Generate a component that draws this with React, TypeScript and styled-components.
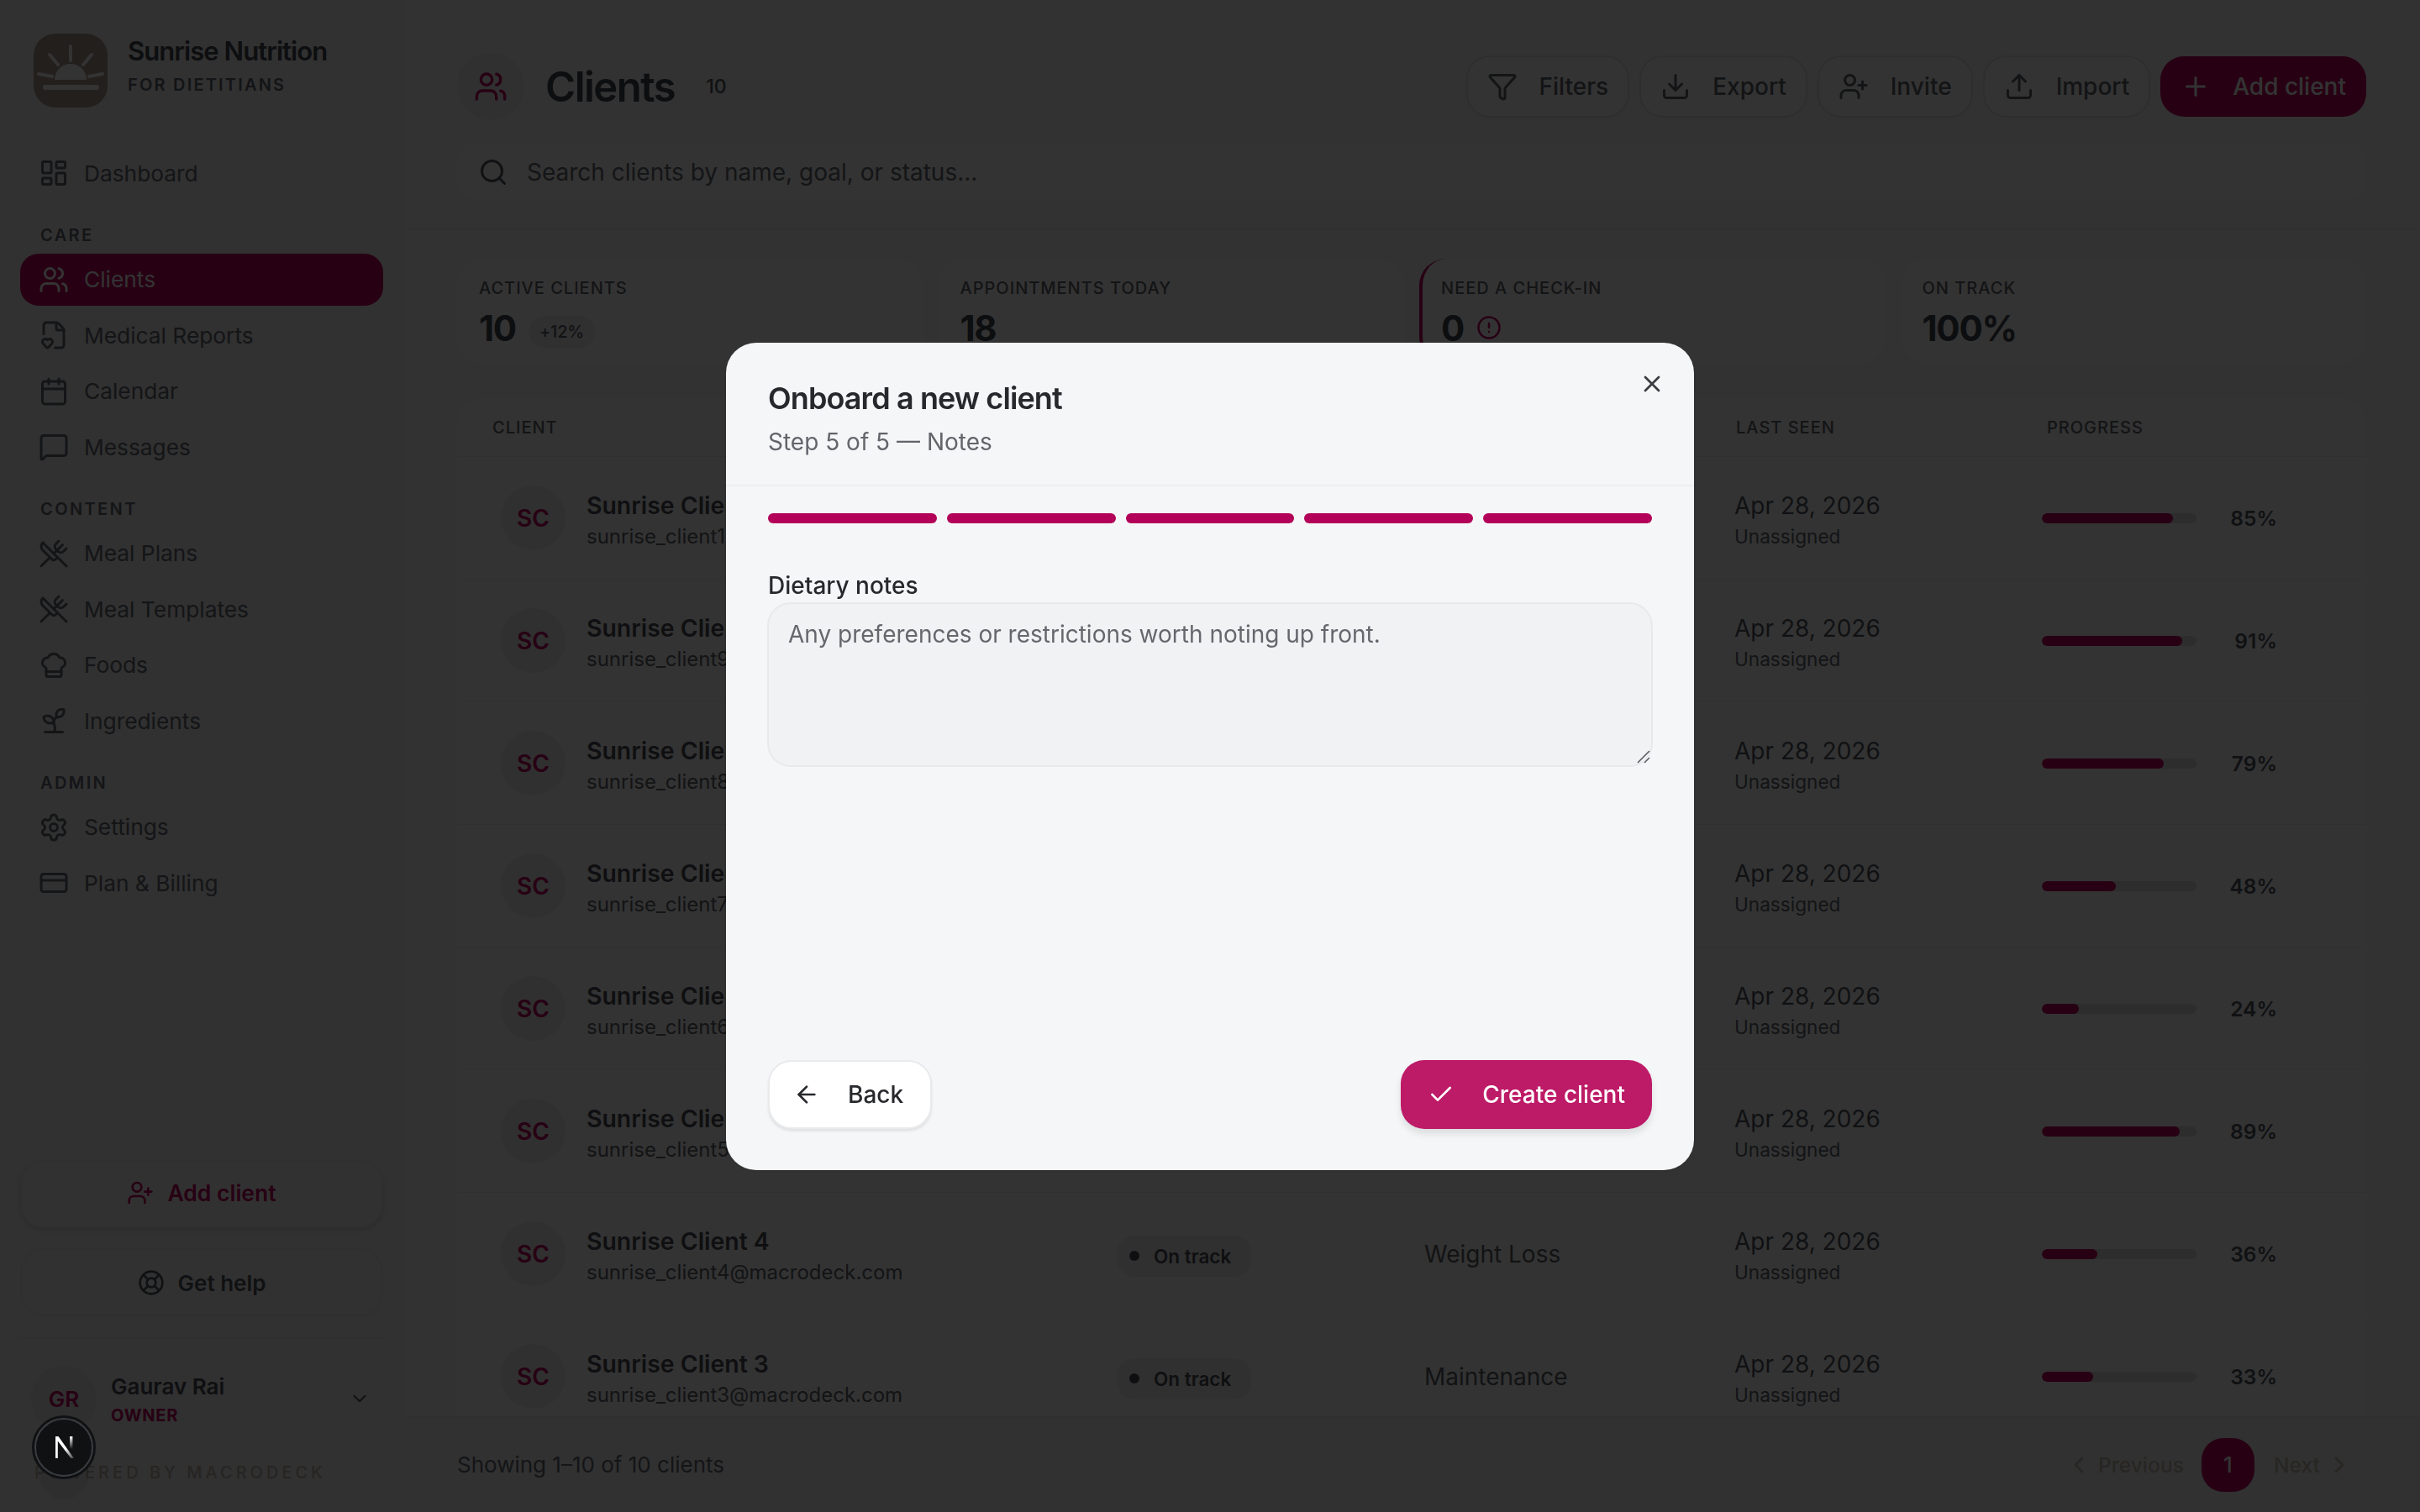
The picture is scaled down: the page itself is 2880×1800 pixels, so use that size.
import styled, { createGlobalStyle } from 'styled-components';
import {
  ArrowLeft, Calendar, Check, ChefHat, ChevronDown, ChevronLeft, ChevronRight, CircleAlert, CreditCard,
  Download, FileHeart, Funnel, LayoutDashboard, LifeBuoy, MessageSquare, Plus, Search, Settings, Sprout,
  Upload, UserPlus, Users, UtensilsCrossed, X,
} from 'lucide-react';

const CRIMSON = '#c4005f';

const GlobalStyle = createGlobalStyle`
  * { box-sizing: border-box; }
  html, body { margin: 0; height: 100%; overflow: hidden; }
  body { font-family: Inter, "Liberation Sans", sans-serif; background: #f8f8f8; color: #555a64; }
`;

const Shell = styled.div`
  display: grid;
  grid-template-columns: 480px 1fr;
  height: 1800px;
  overflow: hidden;
`;

const Sidebar = styled.aside`
  display: flex;
  flex-direction: column;
  padding: 40px 24px 35px;
  background: #f2f2f2;
`;

const Brand = styled.div`
  display: flex;
  align-items: flex-start;
  gap: 24px;
  padding-left: 16px;
  height: 88px;
`;

const BrandText = styled.div`
  display: flex;
  flex-direction: column;
  gap: 8px;
  padding-top: 1px;
`;

const BrandName = styled.div`
  font-size: 31px;
  line-height: 40px;
  font-weight: 600;
  letter-spacing: -0.03em;
  color: #44474f;
`;

const BrandSub = styled.div`
  font-size: 20px;
  line-height: 24px;
  font-weight: 600;
  letter-spacing: 0.11em;
  color: #62666e;
`;

const Nav = styled.nav`
  display: flex;
  flex-direction: column;
  margin-top: 47px;
`;

const NavLabel = styled.div`
  height: 24px;
  line-height: 24px;
  margin: 30px 0 10px 24px;
  font-size: 20px;
  font-weight: 600;
  letter-spacing: 0.12em;
  color: #666a72;
`;

const NavGroup = styled.div`
  display: flex;
  flex-direction: column;
  gap: 4px;
`;

const NavItem = styled.a<{ $active?: boolean }>`
  display: flex;
  align-items: center;
  gap: 18px;
  height: 62.5px;
  padding-left: 22px;
  border-radius: 22px;
  font-size: 26.3px;
  color: ${(p) => (p.$active ? '#fff' : '#666a72')};
  background: ${(p) => (p.$active ? CRIMSON : 'transparent')};
  svg { width: 36px; height: 36px; flex: none; }
`;

const SideBottom = styled.div`
  margin-top: auto;
  display: flex;
  flex-direction: column;
`;

const SideButton = styled.button<{ $primary?: boolean }>`
  display: flex;
  align-items: center;
  justify-content: center;
  gap: 16px;
  height: 81px;
  padding-bottom: ${(p) => (p.$primary ? '4px' : '0')};
  border-radius: 28px;
  border: 2px solid #ececec;
  background: ${(p) => (p.$primary ? '#f6f6f6' : '#f2f2f2')};
  box-shadow: ${(p) => (p.$primary ? '0 3px 4px rgba(0,0,0,0.1)' : 'none')};
  font: 600 ${(p) => (p.$primary ? '26.5px' : '26px')} Inter, sans-serif;
  color: ${(p) => (p.$primary ? CRIMSON : '#52565e')};
  svg { width: 32px; height: 32px; }
  & + & { margin-top: 24px; }
`;

const SideDivider = styled.div`
  height: 2px;
  margin-top: 25px;
  background: #ebebeb;
`;

const UserRow = styled.div`
  display: flex;
  align-items: center;
  gap: 17px;
  margin: 32px 0 0 13px;
  padding-right: 15px;
`;

const UserAvatar = styled.div`
  display: grid;
  place-items: center;
  width: 78px;
  height: 78px;
  border-radius: 50%;
  background: #e8e8e8;
  font-size: 26px;
  font-weight: 600;
  color: ${CRIMSON};
`;

const UserInfo = styled.div`
  flex: 1;
  display: flex;
  flex-direction: column;
  gap: 2px;
  padding-top: 3px;
`;

const UserName = styled.div`
  font-size: 26px;
  line-height: 34px;
  font-weight: 600;
  color: #4a4e56;
`;

const UserRole = styled.div`
  font-size: 20px;
  line-height: 30px;
  font-weight: 700;
  letter-spacing: 0.04em;
  color: ${CRIMSON};
`;

const UserChevron = styled(ChevronDown)`
  width: 26px;
  height: 26px;
  color: #5a5e66;
`;

const Powered = styled.div`
  margin: 37px 0 0 17px;
  font-size: 20px;
  line-height: 24px;
  font-weight: 500;
  letter-spacing: 0.2em;
  color: #c0b6ac;
`;

const Main = styled.main`
  display: flex;
  flex-direction: column;
  min-width: 0;
  height: 1800px;
`;

const PageHeader = styled.header`
  display: flex;
  flex-direction: column;
  gap: 27px;
  height: 273px;
  padding: 63px 64px 0;
  border-bottom: 1px solid #ececec;
`;

const TitleRow = styled.div`
  display: flex;
  align-items: center;
  height: 80px;
`;

const TitleIcon = styled.div`
  display: grid;
  place-items: center;
  width: 80px;
  height: 80px;
  border-radius: 50%;
  background: #eeeeee;
  color: ${CRIMSON};
  svg { width: 40px; height: 40px; }
`;

const PageTitle = styled.h1`
  margin: 0 0 0 25px;
  font-size: 49px;
  font-weight: 600;
  letter-spacing: -0.03em;
  color: #44474f;
`;

const PageCount = styled.span`
  margin-left: 37px;
  font-size: 23px;
  font-weight: 500;
  color: #52565e;
`;

const Actions = styled.div`
  display: flex;
  align-items: center;
  gap: 12px;
  margin-left: auto;
`;

const ActionButton = styled.button<{ $primary?: boolean }>`
  display: flex;
  align-items: center;
  gap: 26px;
  height: ${(p) => (p.$primary ? '72px' : '74px')};
  padding: 0 ${(p) => (p.$primary ? '24px' : '23px')};
  border-radius: 28px;
  border: ${(p) => (p.$primary ? 'none' : '2px solid #e4e4e4')};
  background: ${(p) => (p.$primary ? CRIMSON : '#ffffff')};
  font: 500 28px Inter, sans-serif;
  color: ${(p) => (p.$primary ? '#fff' : '#5f636b')};
  svg { width: 36px; height: 36px; }
`;

const SearchBar = styled.div`
  display: flex;
  align-items: center;
  gap: 22px;
  height: 68px;
  padding: 2px 0 0 25px;
  border-radius: 24px;
  background: #ffffff;
  font-size: 28px;
  color: #666a72;
  svg { width: 36px; height: 36px; color: #52565e; }
`;

const Body = styled.div`
  flex: 1;
  min-height: 0;
  overflow: hidden;
  padding: 35px 64px 0;
`;

const StatGrid = styled.div`
  display: grid;
  grid-template-columns: repeat(4, 1fr);
  gap: 18px;
`;

const StatCard = styled.div<{ $accent?: boolean }>`
  height: 125px;
  padding: 22px 0 0 ${(p) => (p.$accent ? '22px' : '26px')};
  border-radius: 32px;
  background: #ffffff;
  border-left: ${(p) => (p.$accent ? `4px solid ${CRIMSON}` : 'none')};
`;

const StatLabel = styled.div`
  font-size: 20px;
  line-height: 26px;
  font-weight: 500;
  letter-spacing: 0.05em;
  color: #5f636b;
`;

const StatValueRow = styled.div`
  display: flex;
  align-items: center;
  gap: 15px;
  margin-top: 7px;
  height: 54px;
  color: ${CRIMSON};
  svg { width: 30px; height: 30px; }
`;

const StatValue = styled.span`
  font-size: 42px;
  font-weight: 700;
  letter-spacing: -0.03em;
  color: #44474f;
`;

const StatBadge = styled.span`
  display: flex;
  align-items: center;
  height: 38px;
  margin-top: 10px;
  padding: 0 13px;
  border-radius: 19px;
  background: #efefef;
  font-size: 20px;
  font-weight: 500;
  letter-spacing: -0.01em;
  color: #5a5e66;
`;

const Table = styled.div`
  margin-top: 40px;
  border-radius: 32px 32px 0 0;
  background: #ffffff;
`;

const COLUMNS = '786px 365px 369px 366px 1fr';

const TableHead = styled.div`
  display: grid;
  grid-template-columns: ${COLUMNS};
  align-items: center;
  height: 71px;
  padding-top: 2px;
  border-bottom: 1px solid #f0f0f0;
`;

const HeadCell = styled.div<{ $inset?: number }>`
  padding-left: ${(p) => p.$inset ?? 0}px;
  font-size: 20px;
  font-weight: 500;
  letter-spacing: 0.05em;
  color: #5f636b;
`;

const Row = styled.div`
  display: grid;
  grid-template-columns: ${COLUMNS};
  align-items: center;
  height: 146px;
  border-bottom: 1px solid #f0f0f0;
`;

const ClientCell = styled.div`
  display: flex;
  align-items: center;
  gap: 25px;
  padding-left: 52px;
`;

const ClientAvatar = styled.div`
  display: grid;
  place-items: center;
  width: 77px;
  height: 77px;
  border-radius: 50%;
  background: #eeeeee;
  font-size: 28px;
  font-weight: 600;
  color: ${CRIMSON};
`;

const Stack = styled.div`
  display: flex;
  flex-direction: column;
  gap: 2px;
  padding-top: 6px;
`;

const ClientName = styled.div`
  font-size: 28.4px;
  line-height: 36px;
  font-weight: 600;
  color: #4a4e56;
`;

const ClientEmail = styled.div`
  font-size: 24px;
  line-height: 34px;
  color: #5f636b;
`;

const StatusPill = styled.div`
  display: inline-flex;
  align-items: center;
  justify-self: start;
  gap: 17px;
  height: 49px;
  margin-top: 5px;
  padding: 0 24px 0 14px;
  border-radius: 20px;
  background: #efefef;
  font-size: 22.5px;
  font-weight: 600;
  color: #4a4e56;
  &::before {
    content: '';
    width: 12px;
    height: 12px;
    border-radius: 50%;
    background: #4a4e56;
  }
`;

const GoalCell = styled.div`
  font-size: 28px;
  color: #5a5e66;
`;

const SeenDate = styled.div`
  font-size: 28px;
  line-height: 36px;
  color: #52565e;
`;

const SeenBy = styled.div`
  font-size: 22.6px;
  line-height: 34px;
  color: #62666e;
`;

const ProgressCell = styled.div`
  display: flex;
  align-items: center;
`;

const Track = styled.div`
  width: 184px;
  height: 12px;
  border-radius: 6px;
  background: #dfdfdf;
  overflow: hidden;
`;

const Fill = styled.div`
  height: 100%;
  border-radius: 6px;
  background: ${CRIMSON};
`;

const Percent = styled.div`
  width: 96px;
  text-align: right;
  font-size: 24.5px;
  font-weight: 600;
  color: #52565e;
`;

const PageFooter = styled.footer`
  display: flex;
  align-items: center;
  justify-content: space-between;
  height: 114px;
  flex: none;
  padding: 0 64px;
  border-top: 1px solid #eaeaea;
  background: #f4f4f4;
`;

const FooterNote = styled.div`
  font-size: 26px;
  color: #666a72;
`;

const Pager = styled.div`
  display: flex;
  align-items: center;
  gap: 5px;
`;

const PagerLink = styled.div`
  display: flex;
  align-items: center;
  gap: 7px;
  padding: 0 16px 0 18px;
  font-size: 24.6px;
  font-weight: 500;
  color: #c6bcb0;
  svg { width: 32px; height: 32px; }
`;

const PagerCurrent = styled.div`
  display: grid;
  place-items: center;
  width: 63px;
  height: 64px;
  border-radius: 26px;
  background: ${CRIMSON};
  font-size: 26px;
  font-weight: 500;
  color: #fff;
`;

const Backdrop = styled.div`
  position: fixed;
  inset: 0;
  display: flex;
  align-items: center;
  justify-content: center;
  background: rgba(0, 0, 0, 0.8);
`;

const Modal = styled.div`
  position: relative;
  display: flex;
  flex-direction: column;
  width: 1152px;
  height: 985px;
  border-radius: 36px;
  background: #f5f6f8;
  color: #27282c;
  box-shadow: 0 1px 0 2px rgba(0, 0, 0, 0.04);
`;

const ModalHeader = styled.div`
  padding: 42px 50px 31px;
  border-bottom: 2px solid #eeeff1;
`;

const ModalTitle = styled.h2`
  margin: 0;
  font-size: 36px;
  line-height: 48px;
  font-weight: 600;
  letter-spacing: -0.025em;
`;

const ModalSub = styled.p`
  margin: 8px 0 0;
  font-size: 28px;
  line-height: 40px;
  color: #63656b;
`;

const CloseButton = styled.button`
  position: absolute;
  top: 33px;
  right: 34px;
  padding: 0;
  width: 32px;
  height: 32px;
  border: none;
  background: none;
  color: #3a3b40;
  svg { width: 32px; height: 32px; display: block; }
`;

const StepBars = styled.div`
  display: grid;
  grid-template-columns: repeat(5, 1fr);
  gap: 12px;
  margin: 32px 50px 0;
`;

const StepBar = styled.div`
  height: 12px;
  border-radius: 6px;
  background: #b30058;
`;

const Field = styled.label`
  position: relative;
  display: block;
  margin: 55px 49px 0;
`;

const FieldLabel = styled.span`
  display: block;
  margin-left: 1px;
  height: 39px;
  font-size: 28px;
  line-height: 38px;
  font-weight: 500;
  color: #27282c;
`;

const NotesInput = styled.textarea`
  display: block;
  width: 100%;
  height: 196px;
  padding: 16px 23px;
  border: 2px solid #e8e9eb;
  border-radius: 28px;
  outline: none;
  resize: none;
  background: #f1f2f4;
  font: 400 28px/40px Inter, sans-serif;
  &::placeholder { color: #65676d; opacity: 1; }
`;

const ResizeGrip = styled.svg`
  position: absolute;
  right: 3px;
  bottom: 4px;
  width: 16px;
  height: 16px;
`;

const ModalFooter = styled.div`
  display: flex;
  align-items: center;
  justify-content: space-between;
  margin: auto 50px 49px;
`;

const ModalButton = styled.button<{ $primary?: boolean }>`
  display: flex;
  align-items: center;
  gap: 33px;
  height: 82px;
  padding: ${(p) => (p.$primary ? '0 32px' : '0 32px 0 28px')};
  border-radius: 28px;
  border: ${(p) => (p.$primary ? 'none' : '2px solid #e9eaec')};
  background: ${(p) => (p.$primary ? '#bd1a67' : '#ffffff')};
  box-shadow: ${(p) => (p.$primary ? '0 6px 8px rgba(0,0,0,0.1)' : '0 3px 3px rgba(0,0,0,0.08)')};
  font: 500 28px Inter, sans-serif;
  color: ${(p) => (p.$primary ? '#ffffff' : '#27282c')};
  svg { width: 32px; height: 32px; }
`;

const DevBadge = styled.div`
  position: fixed;
  left: 38px;
  top: 1685px;
  display: grid;
  place-items: center;
  width: 76px;
  height: 76px;
  border-radius: 50%;
  background: #0f1113;
  border: 3px solid #0f1113;
  outline: 2px solid #3c3d40;
  outline-offset: -5px;
  box-shadow: 0 32px 0 -8px rgba(0, 0, 0, 0.06);
`;

const navTop = [{ label: 'Dashboard', icon: LayoutDashboard }];
const navSections = [
  {
    title: 'CARE',
    items: [
      { label: 'Clients', icon: Users, active: true },
      { label: 'Medical Reports', icon: FileHeart },
      { label: 'Calendar', icon: Calendar },
      { label: 'Messages', icon: MessageSquare },
    ],
  },
  {
    title: 'CONTENT',
    items: [
      { label: 'Meal Plans', icon: UtensilsCrossed },
      { label: 'Meal Templates', icon: UtensilsCrossed },
      { label: 'Foods', icon: ChefHat },
      { label: 'Ingredients', icon: Sprout },
    ],
  },
  {
    title: 'ADMIN',
    items: [
      { label: 'Settings', icon: Settings },
      { label: 'Plan & Billing', icon: CreditCard },
    ],
  },
];

const clients = [
  { n: 10, goal: 'Weight Loss', progress: 85 },
  { n: 9, goal: 'Maintenance', progress: 91 },
  { n: 8, goal: 'Weight Loss', progress: 79 },
  { n: 7, goal: 'Muscle Gain', progress: 48 },
  { n: 6, goal: 'Maintenance', progress: 24 },
  { n: 5, goal: 'Weight Loss', progress: 89 },
  { n: 4, goal: 'Weight Loss', progress: 36 },
  { n: 3, goal: 'Maintenance', progress: 33 },
];

const SunLogo = () => (
  <svg width="88" height="88" viewBox="0 0 88 88" fill="none">
    <rect width="88" height="88" rx="26" fill="#b09a90" />
    <g stroke="#ffffff" strokeWidth="4" strokeLinecap="round">
      <path d="M44 15v17M19 25l10 12M69 25 59 37M6 48l16 3M82 48l-16 3" />
      <path d="M14 64h61" strokeWidth="6" />
    </g>
    <path d="M25 55a19 19 0 0 1 38 0z" fill="#ffffff" />
  </svg>
);

const NextMark = () => (
  <svg width="26" height="28" viewBox="0 0 26 28" fill="none">
    <defs>
      <linearGradient id="nextFade" x1="0" y1="0" x2="1" y2="1">
        <stop offset="0.55" stopColor="#fff" />
        <stop offset="1" stopColor="#fff" stopOpacity="0.2" />
      </linearGradient>
      <linearGradient id="nextBar" x1="0" y1="0" x2="0" y2="1">
        <stop offset="0" stopColor="#fff" />
        <stop offset="1" stopColor="#fff" stopOpacity="0" />
      </linearGradient>
    </defs>
    <path d="M3 1h3.5L25 27h-3.6L5.8 6.5V27H3z" fill="url(#nextFade)" />
    <rect x="20" y="1" width="3.4" height="15" fill="url(#nextBar)" />
  </svg>
);

const App = () => {
  return (
    <>
      <GlobalStyle />
      <Shell>
        <Sidebar>
          <Brand>
            <SunLogo />
            <BrandText>
              <BrandName>Sunrise Nutrition</BrandName>
              <BrandSub>FOR DIETITIANS</BrandSub>
            </BrandText>
          </Brand>
          <Nav>
            <NavGroup>
              {navTop.map(({ label, icon: Icon }) => (
                <NavItem key={label}>
                  <Icon />
                  {label}
                </NavItem>
              ))}
            </NavGroup>
            {navSections.map((section) => (
              <div key={section.title}>
                <NavLabel>{section.title}</NavLabel>
                <NavGroup>
                  {section.items.map(({ label, icon: Icon, active }: any) => (
                    <NavItem key={label} $active={active}>
                      <Icon />
                      {label}
                    </NavItem>
                  ))}
                </NavGroup>
              </div>
            ))}
          </Nav>
          <SideBottom>
            <SideButton $primary>
              <UserPlus />
              Add client
            </SideButton>
            <SideButton>
              <LifeBuoy />
              Get help
            </SideButton>
            <SideDivider />
            <UserRow>
              <UserAvatar>GR</UserAvatar>
              <UserInfo>
                <UserName>Gaurav Rai</UserName>
                <UserRole>OWNER</UserRole>
              </UserInfo>
              <UserChevron />
            </UserRow>
            <Powered>POWERED BY MACRODECK</Powered>
          </SideBottom>
        </Sidebar>

        <Main>
          <PageHeader>
            <TitleRow>
              <TitleIcon>
                <Users />
              </TitleIcon>
              <PageTitle>Clients</PageTitle>
              <PageCount>10</PageCount>
              <Actions>
                <ActionButton><Funnel />Filters</ActionButton>
                <ActionButton><Download />Export</ActionButton>
                <ActionButton><UserPlus />Invite</ActionButton>
                <ActionButton><Upload />Import</ActionButton>
                <ActionButton $primary><Plus />Add client</ActionButton>
              </Actions>
            </TitleRow>
            <SearchBar>
              <Search />
              Search clients by name, goal, or status...
            </SearchBar>
          </PageHeader>

          <Body>
            <StatGrid>
              <StatCard>
                <StatLabel>ACTIVE CLIENTS</StatLabel>
                <StatValueRow>
                  <StatValue>10</StatValue>
                  <StatBadge>+12%</StatBadge>
                </StatValueRow>
              </StatCard>
              <StatCard>
                <StatLabel>APPOINTMENTS TODAY</StatLabel>
                <StatValueRow>
                  <StatValue>18</StatValue>
                </StatValueRow>
              </StatCard>
              <StatCard $accent>
                <StatLabel>NEED A CHECK-IN</StatLabel>
                <StatValueRow>
                  <StatValue>0</StatValue>
                  <CircleAlert />
                </StatValueRow>
              </StatCard>
              <StatCard>
                <StatLabel>ON TRACK</StatLabel>
                <StatValueRow>
                  <StatValue>100%</StatValue>
                </StatValueRow>
              </StatCard>
            </StatGrid>

            <Table>
              <TableHead>
                <HeadCell $inset={42}>CLIENT</HeadCell>
                <HeadCell>STATUS</HeadCell>
                <HeadCell>GOAL</HeadCell>
                <HeadCell $inset={2}>LAST SEEN</HeadCell>
                <HeadCell $inset={6}>PROGRESS</HeadCell>
              </TableHead>
              {clients.map((client) => (
                <Row key={client.n}>
                  <ClientCell>
                    <ClientAvatar>SC</ClientAvatar>
                    <Stack>
                      <ClientName>Sunrise Client {client.n}</ClientName>
                      <ClientEmail>sunrise_client{client.n}@macrodeck.com</ClientEmail>
                    </Stack>
                  </ClientCell>
                  <StatusPill>On track</StatusPill>
                  <GoalCell>{client.goal}</GoalCell>
                  <Stack>
                    <SeenDate>Apr 28, 2026</SeenDate>
                    <SeenBy>Unassigned</SeenBy>
                  </Stack>
                  <ProgressCell>
                    <Track>
                      <Fill style={{ width: `${client.progress}%` }} />
                    </Track>
                    <Percent>{client.progress}%</Percent>
                  </ProgressCell>
                </Row>
              ))}
            </Table>
          </Body>

          <PageFooter>
            <FooterNote>Showing 1–10 of 10 clients</FooterNote>
            <Pager>
              <PagerLink><ChevronLeft />Previous</PagerLink>
              <PagerCurrent>1</PagerCurrent>
              <PagerLink>Next<ChevronRight /></PagerLink>
            </Pager>
          </PageFooter>
        </Main>
      </Shell>

      <Backdrop>
        <Modal>
          <ModalHeader>
            <ModalTitle>Onboard a new client</ModalTitle>
            <ModalSub>Step 5 of 5 — Notes</ModalSub>
          </ModalHeader>
          <CloseButton><X /></CloseButton>
          <StepBars>
            {[1, 2, 3, 4, 5].map((step) => (
              <StepBar key={step} />
            ))}
          </StepBars>
          <Field>
            <FieldLabel>Dietary notes</FieldLabel>
            <NotesInput placeholder="Any preferences or restrictions worth noting up front." />
            <ResizeGrip viewBox="0 0 16 16" fill="none" stroke="#55575c" strokeWidth="1.5">
              <path d="M1 15 15 1M9 15l6-6" />
            </ResizeGrip>
          </Field>
          <ModalFooter>
            <ModalButton><ArrowLeft />Back</ModalButton>
            <ModalButton $primary><Check />Create client</ModalButton>
          </ModalFooter>
        </Modal>
      </Backdrop>

      <DevBadge>
        <NextMark />
      </DevBadge>
    </>
  );
};

export default App;
